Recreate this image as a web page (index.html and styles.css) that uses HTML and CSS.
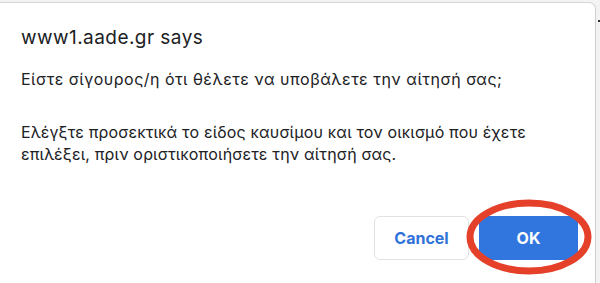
FILE: index.html
```html
<!DOCTYPE html>
<html lang="el">
<head>
<meta charset="utf-8">
<title>www1.aade.gr says</title>
<link rel="stylesheet" href="styles.css">
</head>
<body>
<div class="page">
  <div class="dialog">
    <div class="title">www1.aade.gr says</div>
    <div class="message">
      <p class="line">Είστε σίγουρος/η ότι θέλετε να υποβάλετε την αίτησή σας;</p>
      <p class="para">Ελέγξτε προσεκτικά το είδος καυσίμου και τον οικισμό που έχετε<br>επιλέξει, πριν οριστικοποιήσετε την αίτησή σας.</p>
    </div>
    <div class="actions">
      <button class="btn cancel">Cancel</button>
      <div class="ok-wrap">
        <button class="btn ok">OK</button>
        <svg class="ring" width="130" height="80" viewBox="0 0 130 80">
          <ellipse cx="64" cy="39" rx="59" ry="34" fill="none" stroke="#e5402a" stroke-width="7"/>
        </svg>
      </div>
    </div>
  </div>
  <div class="edge-mark"></div>
</div>
</body>
</html>
```
FILE: styles.css
```css
html, body {
  margin: 0;
  padding: 0;
}
body {
  width: 600px;
  height: 283px;
  overflow: hidden;
  background: #f3f3f3;
  font-family: Inter, "Noto Sans", "Liberation Sans", sans-serif;
}
.page {
  position: relative;
  width: 600px;
  height: 283px;
  overflow: hidden;
  padding-top: 2px;
  box-sizing: border-box;
}
.dialog {
  width: 596px;
  height: 290px;
  box-sizing: border-box;
  background: #ffffff;
  border-top: 1px solid #d6d6d6;
  border-right: 1px solid #cfcfcf;
  border-top-right-radius: 7px;
  padding: 24px 0 0 21px;
  display: flex;
  flex-direction: column;
}
.title {
  font-size: 19px;
  line-height: 22px;
  letter-spacing: 0.45px;
  color: #202124;
}
.message {
  margin-top: 19px;
  font-size: 16px;
  line-height: 22px;
  color: #202124;
}
.message p {
  margin: 0;
}
.message .line {
  letter-spacing: 0.5px;
}
.message .para {
  margin-top: 31px;
  letter-spacing: 0.17px;
}
.actions {
  display: flex;
  justify-content: flex-end;
  gap: 10px;
  padding-right: 17px;
  margin-top: 51px;
}
.btn {
  height: 44px;
  border-radius: 6px;
  font-family: inherit;
  font-size: 16px;
  font-weight: 700;
  cursor: pointer;
}
.cancel {
  width: 95px;
  background: #ffffff;
  color: #2f72d9;
  border: 1px solid #e2e2e2;
}
.ok-wrap {
  position: relative;
}
.ok {
  width: 99px;
  background: #3176de;
  color: #ffffff;
  border: none;
  border-radius: 3px;
}
.ring {
  position: absolute;
  left: -14px;
  top: -18px;
  pointer-events: none;
}
.edge-mark {
  position: absolute;
  right: 0;
  top: 20px;
  width: 2px;
  height: 2px;
  background: #333;
}
```
